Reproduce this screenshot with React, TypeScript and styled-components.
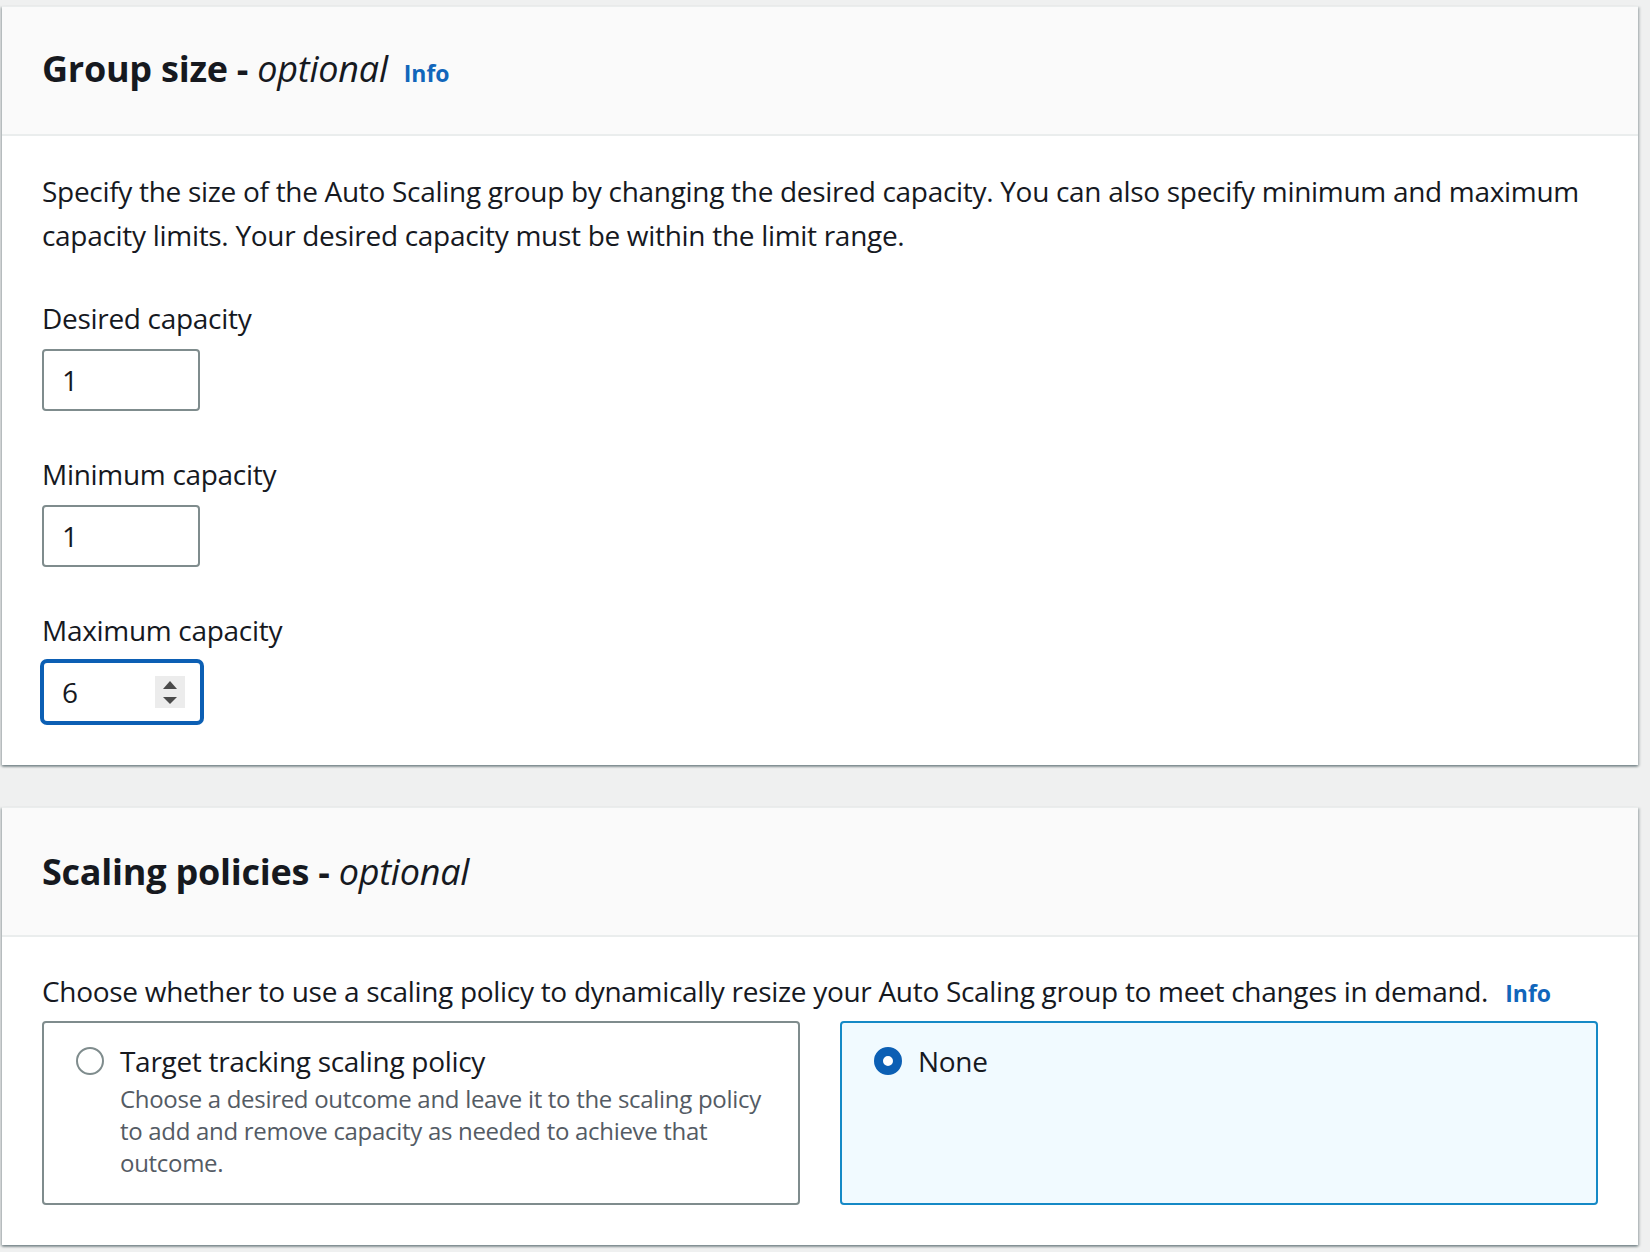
import React from "react";
import styled, { createGlobalStyle, css } from "styled-components";

const GlobalStyle = createGlobalStyle`
  html, body {
    margin: 0;
    padding: 0;
    background: #eff0f0;
  }
  body {
    font-family: "Open Sans", "Noto Sans", "Liberation Sans", sans-serif;
    color: #16191f;
    -webkit-font-smoothing: antialiased;
  }
  * { box-sizing: border-box; }
`;

const Page = styled.main`
  display: flex;
  flex-direction: column;
  gap: 42px;
  padding: 6px 12px 6px 2px;
`;

const Card = styled.section`
  background: #ffffff;
  box-shadow: 0 2px 2px 0 rgba(0, 28, 36, 0.32), 2px 1px 2px 0 rgba(0, 28, 36, 0.16),
    -2px 1px 2px 0 rgba(0, 28, 36, 0.16);
`;

const CardHeader = styled.header`
  display: flex;
  align-items: center;
  height: 130px;
  padding: 0 40px;
  background: #fafafa;
  border-top: 1px solid #eaeded;
  border-bottom: 2px solid #eaeded;
`;

const Title = styled.h2`
  margin: 0;
  font-size: 36px;
  line-height: 44px;
  font-weight: 700;
  letter-spacing: -0.25px;
  color: #16191f;
`;

const Optional = styled.i`
  font-weight: 400;
  font-style: italic;
`;

const InfoLink = styled.a<{ $gap: number }>`
  margin-left: ${(p) => p.$gap}px;
  font-size: 23px;
  font-weight: 700;
  letter-spacing: 0;
  color: #1166bb;
  text-decoration: none;
  font-style: normal;
`;

const CardBody = styled.div<{ $top: number; $bottom: number }>`
  display: flex;
  flex-direction: column;
  padding: ${(p) => p.$top}px 40px ${(p) => p.$bottom}px;
`;

const Paragraph = styled.p`
  margin: 0;
  font-size: 28px;
  line-height: 44px;
  letter-spacing: -0.3px;
`;

const Field = styled.div`
  display: flex;
  flex-direction: column;
  align-items: flex-start;
  margin-top: 41px;

  &:nth-of-type(1) {
    margin-top: 39px;
  }
`;

const Label = styled.label`
  font-size: 28px;
  line-height: 44px;
  letter-spacing: -0.3px;
  margin-bottom: 9px;
`;

const InputShell = styled.div<{ $focused?: boolean }>`
  display: flex;
  align-items: center;
  width: 158px;
  height: 62px;
  padding: 0 17px 0 18px;
  border: 2px solid #7f8c8d;
  border-radius: 4px;
  background: #ffffff;
  ${(p) =>
    p.$focused &&
    css`
      width: 160px;
      padding-right: 15px;
      border-color: #0c5fb4;
      box-shadow: 0 0 0 2px #0c5fb4;
      border-radius: 5px;
    `}
`;

const ValueInput = styled.input`
  flex: 1;
  min-width: 0;
  border: none;
  outline: none;
  padding: 0;
  background: transparent;
  font-family: inherit;
  font-size: 28px;
  color: #16191f;
`;

const Spinner = styled.span`
  display: flex;
  flex-direction: column;
  align-items: center;
  justify-content: center;
  gap: 8px;
  width: 30px;
  height: 32px;
  background: #ececec;
`;

const Arrow = styled.span<{ $up?: boolean }>`
  width: 0;
  height: 0;
  border-left: 7px solid transparent;
  border-right: 7px solid transparent;
  ${(p) =>
    p.$up
      ? css`
          border-bottom: 8px solid #4a4a4a;
        `
      : css`
          border-top: 7px solid #4a4a4a;
        `}
`;

const TileGrid = styled.div`
  display: grid;
  grid-template-columns: 1fr 1fr;
  gap: 40px;
  margin-top: 6px;
`;

const Tile = styled.label<{ $selected?: boolean }>`
  display: flex;
  align-items: flex-start;
  gap: 16px;
  padding: 16px 32px 24px;
  border: 2px solid ${(p) => (p.$selected ? "#1589c6" : "#7f8c8d")};
  border-radius: 4px;
  background: ${(p) => (p.$selected ? "#f1faff" : "#ffffff")};
`;

const RadioDot = styled.span<{ $checked?: boolean }>`
  flex: none;
  width: 28px;
  height: 28px;
  margin-top: 8px;
  border-radius: 50%;
  background: #ffffff;
  border: ${(p) => (p.$checked ? "9px solid #0c5fb4" : "2px solid #7f8c8d")};
`;

const TileText = styled.span`
  display: flex;
  flex-direction: column;
`;

const TileLabel = styled.span`
  font-size: 28px;
  line-height: 44px;
  letter-spacing: -0.3px;
  color: #16191f;
`;

const TileDescription = styled.span`
  font-size: 24px;
  line-height: 32px;
  letter-spacing: -0.3px;
  color: #545b64;
`;

const fields = [
  { label: "Desired capacity", value: "1" },
  { label: "Minimum capacity", value: "1" },
  { label: "Maximum capacity", value: "6", focused: true },
];

export default function App() {
  return (
    <>
      <GlobalStyle />
      <Page>
        <Card>
          <CardHeader>
            <Title>
              Group size - <Optional>optional</Optional>
              <InfoLink $gap={16}>Info</InfoLink>
            </Title>
          </CardHeader>
          <CardBody $top={33} $bottom={42}>
            <Paragraph>
              Specify the size of the Auto Scaling group by changing the desired capacity. You can also specify minimum
              and maximum capacity limits. Your desired capacity must be within the limit range.
            </Paragraph>
            {fields.map((f) => (
              <Field key={f.label}>
                <Label>{f.label}</Label>
                <InputShell $focused={f.focused}>
                  <ValueInput type="text" value={f.value} readOnly aria-label={f.label} />
                  {f.focused && (
                    <Spinner>
                      <Arrow $up />
                      <Arrow />
                    </Spinner>
                  )}
                </InputShell>
              </Field>
            ))}
          </CardBody>
        </Card>

        <Card>
          <CardHeader>
            <Title>
              Scaling policies - <Optional>optional</Optional>
            </Title>
          </CardHeader>
          <CardBody $top={32} $bottom={40}>
            <Paragraph>
              Choose whether to use a scaling policy to dynamically resize your Auto Scaling group to meet changes in
              demand.
              <InfoLink $gap={17}>Info</InfoLink>
            </Paragraph>
            <TileGrid>
              <Tile>
                <RadioDot />
                <TileText>
                  <TileLabel>Target tracking scaling policy</TileLabel>
                  <TileDescription>
                    Choose a desired outcome and leave it to the scaling policy to add and remove capacity as needed to
                    achieve that outcome.
                  </TileDescription>
                </TileText>
              </Tile>
              <Tile $selected>
                <RadioDot $checked />
                <TileText>
                  <TileLabel>None</TileLabel>
                </TileText>
              </Tile>
            </TileGrid>
          </CardBody>
        </Card>
      </Page>
    </>
  );
}
